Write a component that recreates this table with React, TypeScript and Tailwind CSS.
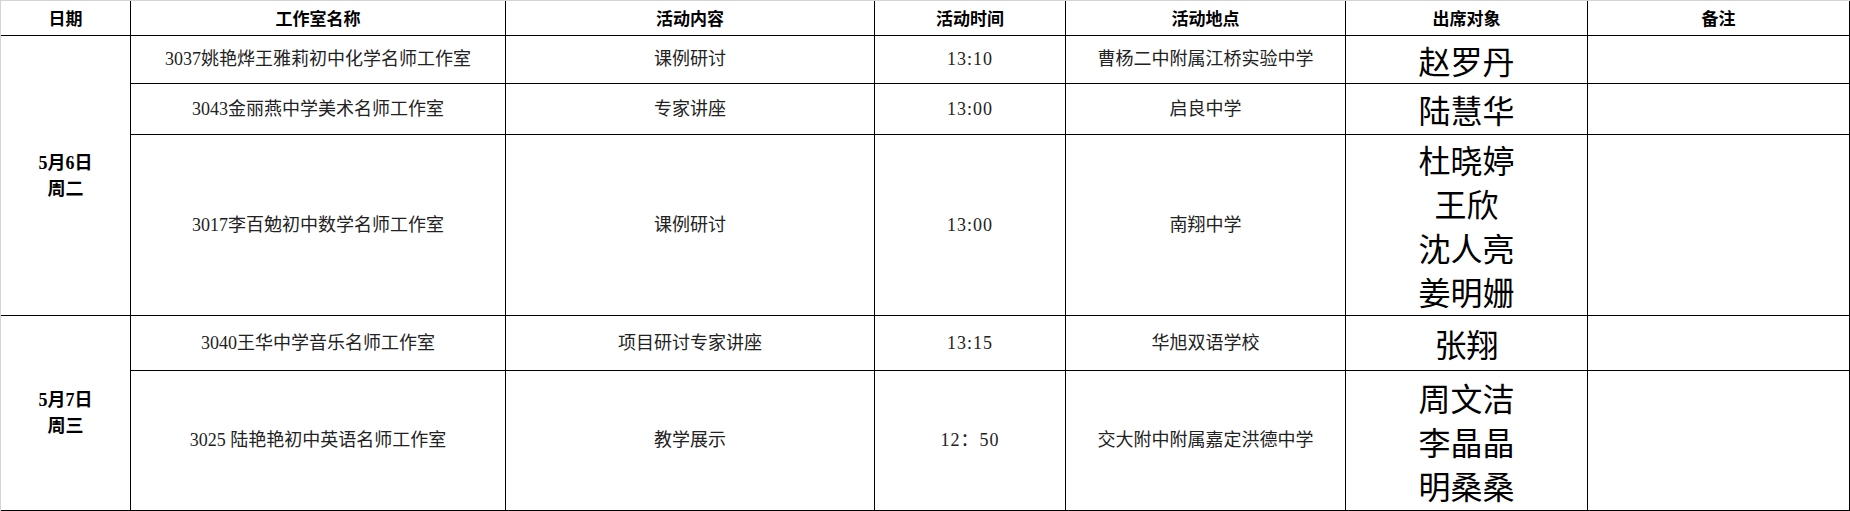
import React from 'react';

const serif = "font-['Liberation_Serif','Noto_Sans_CJK_SC',serif]";

const headers = ['日期', '工作室名称', '活动内容', '活动时间', '活动地点', '出席对象', '备注'];

type Row = { studio: string; content: string; time: string; place: string; people: string[] };

const days: { date: string; week: string; span: string; rows: Row[] }[] = [
  {
    date: '5月6日',
    week: '周二',
    span: 'row-span-3',
    rows: [
      { studio: '3037姚艳烨王雅莉初中化学名师工作室', content: '课例研讨', time: '13:10', place: '曹杨二中附属江桥实验中学', people: ['赵罗丹'] },
      { studio: '3043金丽燕中学美术名师工作室', content: '专家讲座', time: '13:00', place: '启良中学', people: ['陆慧华'] },
      { studio: '3017李百勉初中数学名师工作室', content: '课例研讨', time: '13:00', place: '南翔中学', people: ['杜晓婷', '王欣', '沈人亮', '姜明姗'] },
    ],
  },
  {
    date: '5月7日',
    week: '周三',
    span: 'row-span-2',
    rows: [
      { studio: '3040王华中学音乐名师工作室', content: '项目研讨专家讲座', time: '13:15', place: '华旭双语学校', people: ['张翔'] },
      { studio: '3025 陆艳艳初中英语名师工作室', content: '教学展示', time: '12：50', place: '交大附中附属嘉定洪德中学', people: ['周文洁', '李晶晶', '明桑桑'] },
    ],
  },
];

const cell = 'border-r border-b border-black flex items-center justify-center text-center';

export default function App() {
  return (
    <div className="w-[1850px] h-[511px] bg-white overflow-hidden">
      <div className="border-l border-t border-[#d4d4d4] grid grid-cols-[130px_375px_369px_191px_280px_242px_262px] grid-rows-[35px_48px_51px_181px_55px_140px]">
        {headers.map((h) => (
          <div key={h} className={`${cell} font-['Noto_Sans_CJK_SC',sans-serif] font-bold text-[17px] text-black`}>
            {h}
          </div>
        ))}
        {days.map((d) => (
          <React.Fragment key={d.date}>
            <div className={`${cell} ${d.span} col-start-1 flex-col ${serif} font-bold text-[18px] leading-[26px] text-black`}>
              <span>{d.date}</span>
              <span>{d.week}</span>
            </div>
            {d.rows.map((r) => (
              <React.Fragment key={r.studio}>
                <div className={`${cell} col-start-2 ${serif} text-[18px] text-[#222]`}>{r.studio}</div>
                <div className={`${cell} ${serif} text-[18px] text-[#222]`}>{r.content}</div>
                <div className={`${cell} ${serif} text-[18px] tracking-[1px] text-[#222]`}>{r.time}</div>
                <div className={`${cell} ${serif} text-[18px] text-[#222]`}>{r.place}</div>
                <div className={`${cell} flex-col font-['Noto_Sans_CJK_SC',serif] text-[32px] leading-[44px] text-black`}>
                  {r.people.map((p) => (
                    <span key={p}>{p}</span>
                  ))}
                </div>
                <div className={cell} />
              </React.Fragment>
            ))}
          </React.Fragment>
        ))}
      </div>
    </div>
  );
}
